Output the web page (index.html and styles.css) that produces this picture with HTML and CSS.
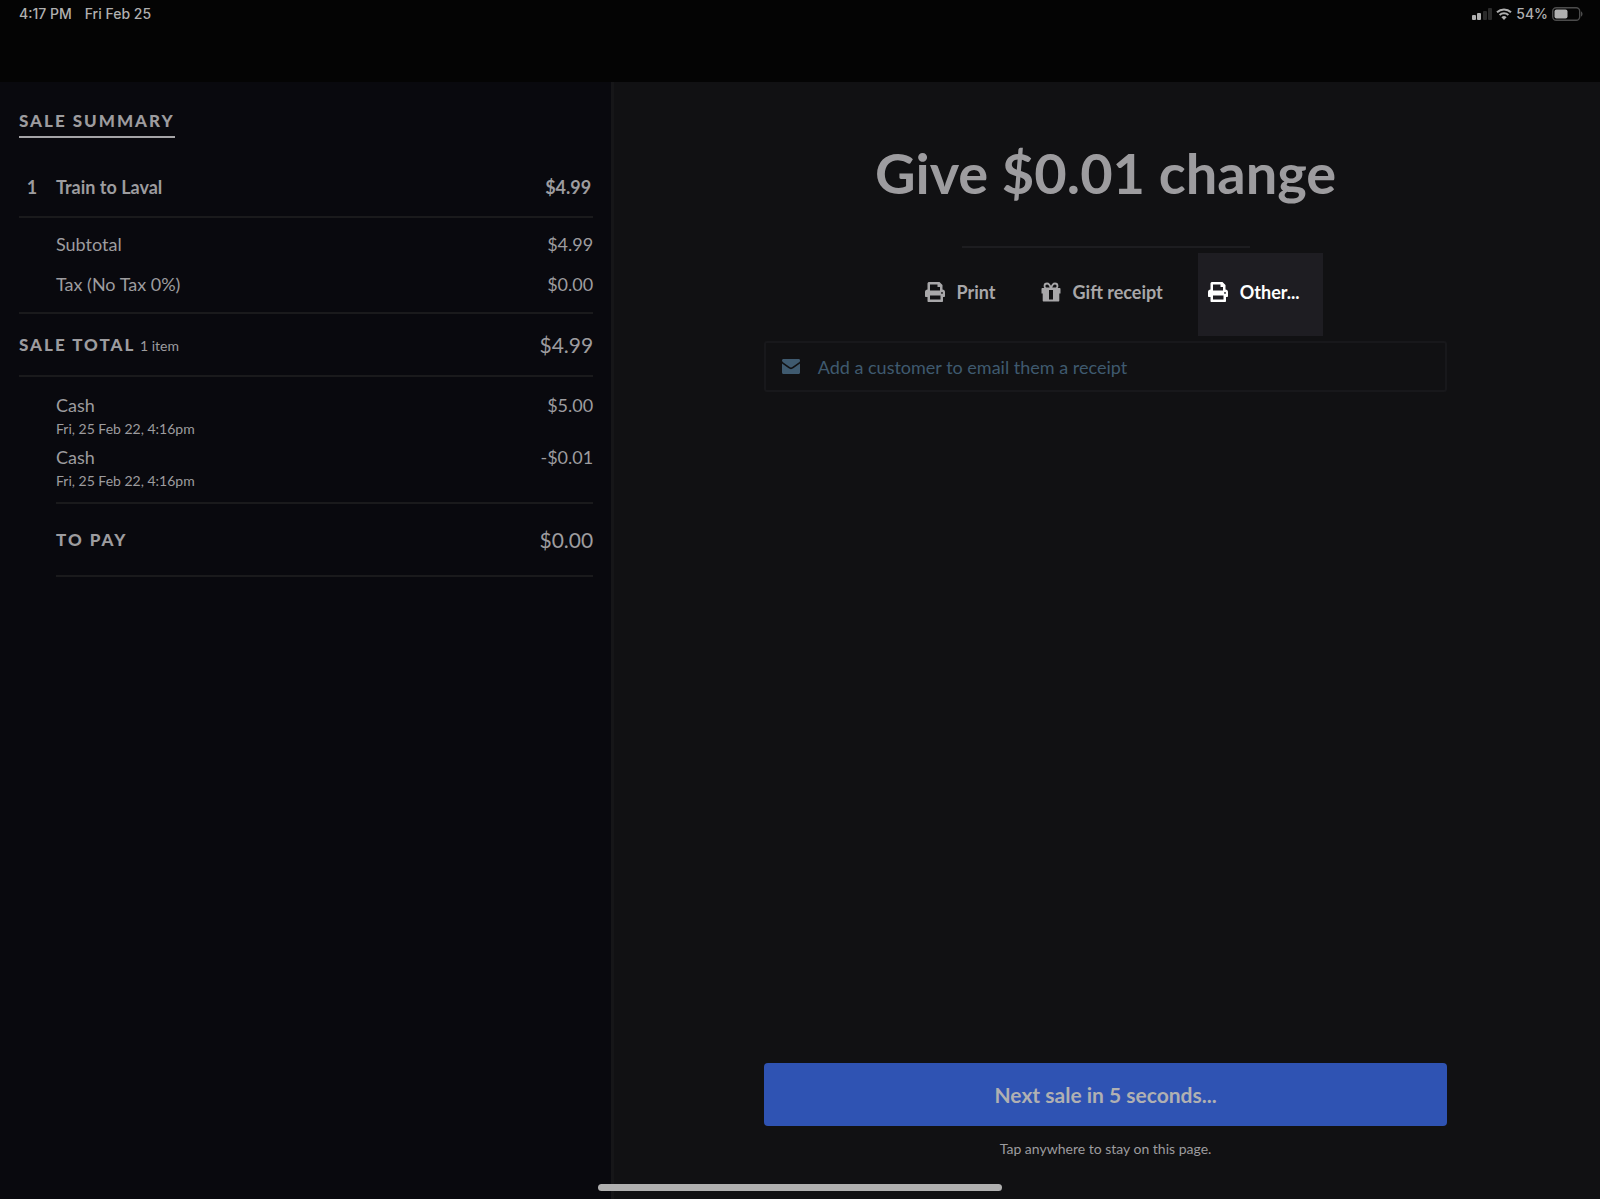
FILE: index.html
```html
<!DOCTYPE html>
<html lang="en">
  <head>
    <meta charset="UTF-8" />
    <meta name="viewport" content="width=device-width, initial-scale=1.0" />
    <title>Sale complete</title>
    <link rel="stylesheet" href="styles.css">
  </head>
  <body>
    <!-- icons used more than once -->
    <svg class="sprite" aria-hidden="true">
      <symbol id="icon-printer" viewBox="0 0 20 20">
        <path fill-rule="evenodd" d="M4.500 0h10L17.500 3v4.500c1.500 0 2.500 1 2.500 2.500v4c0 .6-.4 1-1 1h-1v4c0 .6-.4 1-1 1H3.500c-.6 0-1-.4-1-1v-4H1c-.6 0-1-.4-1-1v-4c0-1.500 1-2.500 2.500-2.500V1.500C2.500.7 3.200 0 4.500 0zM5 2.500v6h10V5h-2.500V2.500zM5 13.500v4h10.500v-4zM17 10a.9.9 0 1 0 0 1.800.9.9 0 0 0 0-1.800z" />
      </symbol>
    </svg>

    <header class="status">
      <div class="status-left">
        <span>4:17 PM</span>
        <span>Fri Feb 25</span>
      </div>
      <div class="status-right">
        <svg class="signal" viewBox="0 0 20 12" aria-hidden="true">
          <rect x="0" y="7" width="4" height="5" rx="1" />
          <rect x="5" y="5" width="4" height="7" rx="1" />
          <rect class="off" x="11" y="3" width="4" height="9" rx="1" />
          <rect class="off" x="16" y="0" width="4" height="12" rx="1" />
        </svg>
        <svg class="wifi" viewBox="0 0 16 12" aria-hidden="true">
          <path d="M1 4.200a10.200 10.200 0 0 1 14 0M3.600 6.900a6.400 6.400 0 0 1 8.800 0" fill="none" stroke="currentColor" stroke-width="2" />
          <path d="M8 12l-2.600-2.700a3.800 3.800 0 0 1 5.200 0z" />
        </svg>
        <span>54%</span>
        <svg class="battery" viewBox="0 0 31 14" aria-hidden="true">
          <rect class="shell" x="0.700" y="0.700" width="27" height="12.600" rx="3.500" />
          <rect x="2.500" y="2.500" width="13" height="9" rx="2" />
          <path class="tip" d="M29 4.500c2 .6 2 4.400 0 5z" />
        </svg>
      </div>
    </header>

    <main class="screen">
      <section class="summary">
        <h2 class="label title">Sale summary</h2>

        <div class="row item">
          <span class="qty">1</span>
          <span class="name">Train to Laval</span>
          <span>$4.99</span>
        </div>

        <div class="taxes">
          <div class="row">
            <span>Subtotal</span>
            <span>$4.99</span>
          </div>
          <div class="row">
            <span>Tax (No Tax 0%)</span>
            <span>$0.00</span>
          </div>
        </div>

        <div class="row total">
          <div><span class="label">Sale total</span> <small>1 item</small></div>
          <span class="amount">$4.99</span>
        </div>

        <div class="payments">
          <div class="payment">
            <div class="row">
              <span>Cash</span>
              <span>$5.00</span>
            </div>
            <small>Fri, 25 Feb 22, 4:16pm</small>
          </div>
          <div class="payment">
            <div class="row">
              <span>Cash</span>
              <span>-$0.01</span>
            </div>
            <small>Fri, 25 Feb 22, 4:16pm</small>
          </div>
        </div>

        <div class="row to-pay">
          <span class="label">To pay</span>
          <span class="amount">$0.00</span>
        </div>
      </section>

      <section class="complete">
        <h1>Give $0.01 change</h1>
        <hr>

        <div class="actions">
          <button class="action" type="button">
            <svg class="icon" aria-hidden="true"><use href="#icon-printer" /></svg>
            Print
          </button>
          <button class="action" type="button">
            <svg class="icon" viewBox="0 0 20 20" aria-hidden="true">
              <path d="M1.500 6h17c.6 0 1 .4 1 1v4.500h-1.200v7c0 .6-.4 1-1 1H2.700c-.6 0-1-.4-1-1v-7H.5V7c0-.6.4-1 1-1z" />
              <rect class="ribbon" x="8" y="8" width="4" height="9.500" />
              <path d="M10 6.500C9.200 3.500 8 1.500 6 1.500a2.500 2.500 0 0 0 0 5zM10 6.500c.8-3 2-5 4-5a2.500 2.500 0 0 1 0 5z" fill="none" stroke="currentColor" stroke-width="1.800" />
            </svg>
            Gift receipt
          </button>
          <button class="action active" type="button">
            <svg class="icon" aria-hidden="true"><use href="#icon-printer" /></svg>
            Other...
          </button>
        </div>

        <button class="customer" type="button">
          <svg class="mail" viewBox="0 0 18 15" aria-hidden="true">
            <path d="M1.500 0h15C17.500 0 18 .6 18 1.400c0 .9-.5 1.600-1.300 2.200l-5.700 4c-.8.6-1.300.9-2 .9s-1.200-.3-2-.9l-5.700-4C.5 3 0 2.300 0 1.500 0 .6.600 0 1.500 0z" />
            <path d="M0 4.500l6.300 4.600c1 .7 1.700 1.100 2.700 1.100s1.700-.4 2.700-1.100L18 4.500v9c0 .9-.6 1.500-1.500 1.500h-15C.6 15 0 14.400 0 13.500z" />
          </svg>
          Add a customer to email them a receipt
        </button>

        <button class="next" type="button">Next sale in 5 seconds...</button>
        <p class="hint">Tap anywhere to stay on this page.</p>
      </section>
    </main>

    <div class="home-bar"></div>
  </body>
</html>
```

FILE: styles.css
```css
* {
  box-sizing: border-box;
}
body {
  display: flex;
  flex-direction: column;
  min-height: 100vh;
  margin: 0;
  background: #111113;
  color: #9d9c9f;
  font-family: Lato, "Open Sans", sans-serif;
  font-size: 18px;
  line-height: 26px;
}
h1,
h2,
p {
  margin: 0;
}
button {
  border: 0;
  background: none;
  color: inherit;
  font: inherit;
  cursor: pointer;
}
svg {
  flex: none;
  fill: currentColor;
}
small {
  font-size: 14px;
  line-height: 22px;
}
.sprite {
  position: absolute;
  width: 0;
  height: 0;
}

/* status bar */
.status {
  display: flex;
  justify-content: space-between;
  height: 82px;
  padding: 4px 17px 4px 19px;
  background: #040404;
  color: #b0b0b0;
  font-family: Inter, sans-serif;
  font-size: 14px;
  font-weight: 500;
  line-height: 20px;
}
.status-left {
  display: flex;
  gap: 13px;
}
.status-right {
  display: flex;
  align-items: center;
  gap: 4px;
  height: 20px;
}
.signal {
  width: 20px;
  height: 12px;
}
.signal .off {
  fill: #2b2b2b;
}
.wifi {
  width: 16px;
  height: 12px;
}
.battery {
  width: 31px;
  height: 14px;
}
.battery .shell {
  fill: none;
  stroke: #4c4c4c;
  stroke-width: 1.4;
}
.battery .tip {
  fill: #4c4c4c;
}

.screen {
  display: flex;
  flex: 1;
}

/* left side */
.summary {
  width: 38.2%;
  padding: 25px 18px 25px 19px;
  background: #09090e;
}
.label {
  font-size: 17px;
  font-weight: 900;
  letter-spacing: 2px;
  text-transform: uppercase;
}
.title {
  display: inline-block;
  padding-bottom: 4px;
  border-bottom: 2px solid #a5a4a7;
  line-height: 22px;
}
.row {
  display: flex;
  align-items: center;
  justify-content: space-between;
}
.item {
  height: 60px;
  margin-top: 20px;
  padding-right: 2px;
  border-bottom: 2px solid #1a1a1c;
  font-weight: 700;
}
.qty {
  width: 26px;
  margin-right: 11px;
  text-align: center;
}
.name {
  flex: 1;
}
.taxes {
  padding: 6px 0 8px 37px;
  border-bottom: 2px solid #1a1a1c;
}
.taxes .row {
  height: 40px;
}
.total {
  height: 63px;
  border-bottom: 2px solid #1a1a1c;
}
.amount {
  font-size: 21px;
}
.payments {
  display: flex;
  flex-direction: column;
  gap: 4px;
  margin-left: 37px;
  padding: 15px 0 10px;
  border-bottom: 2px solid #1a1a1c;
}
.payment small {
  display: block;
}
.to-pay {
  height: 73px;
  margin-left: 37px;
  border-bottom: 2px solid #1a1a1c;
}

/* right side */
.complete {
  display: flex;
  flex: 1;
  flex-direction: column;
  align-items: center;
  padding: 55px 6px 39px 3px;
  border-left: 3px solid #161618;
}
h1 {
  font-size: 56px;
  font-weight: 700;
  line-height: 72px;
}
hr {
  width: 288px;
  height: 2px;
  margin: 37px 0 5px;
  border: 0;
  background: #1d1d20;
}
.actions {
  display: flex;
  gap: 12px;
  padding-left: 26px;
}
.action {
  display: flex;
  align-items: center;
  gap: 12px;
  height: 83px;
  padding: 0 23px 6px 10px;
  color: #a8a7a9;
  font-weight: 700;
}
.action.active {
  background: #1e1d22;
  color: #fff;
}
.icon {
  width: 20px;
  height: 20px;
}
.ribbon {
  fill: #111113;
}
.customer {
  display: flex;
  align-items: center;
  gap: 18px;
  width: 70%;
  height: 51px;
  margin-top: 5px;
  padding: 0 16px;
  border: 2px solid #18181b;
  border-radius: 3px;
  color: #3f5a6f;
}
.mail {
  width: 18px;
  height: 15px;
}
.next {
  width: 70%;
  height: 63px;
  margin-top: auto;
  border-radius: 4px;
  background: #2f53b3;
  color: #b0b0b2;
  font-size: 21px;
  font-weight: 700;
}
.hint {
  margin-top: 12px;
  font-size: 14px;
  line-height: 22px;
}

.home-bar {
  position: absolute;
  bottom: 8px;
  left: 50%;
  width: 404px;
  height: 7px;
  margin-left: -202px;
  border-radius: 4px;
  background: #b0b0b0;
}
```
